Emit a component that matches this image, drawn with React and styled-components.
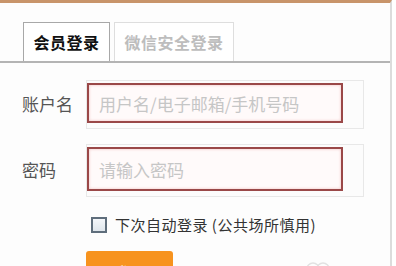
import React from "react";
import styled, { createGlobalStyle } from "styled-components";

const GlobalStyle = createGlobalStyle`
  html, body {
    margin: 0;
    padding: 0;
    background: #ffffff;
    overflow: hidden;
  }
  body {
    font-family: "Noto Sans CJK SC", "Noto Sans", sans-serif;
  }
`;

const Panel = styled.div`
  width: 392px;
  height: 266px;
  overflow: hidden;
  box-sizing: border-box;
  border-top: 3px solid #c8946a;
  border-right: 2px solid #dcdcdc;
  background: #fdfdfd;
  padding-top: 19px;
`;

const TabBar = styled.div`
  display: flex;
  gap: 4px;
  padding-left: 23px;
  border-bottom: 2px solid #b4b4b4;
`;

const Tab = styled.div`
  height: 39px;
  box-sizing: border-box;
  width: ${(p) => p.$w}px;
  display: flex;
  align-items: center;
  justify-content: center;
  border: 1px solid ${(p) => (p.$active ? "#a8a8a8" : "#dedede")};
  border-bottom: none;
  background: #fff;
  font-size: 16px;
  font-weight: 700;
  color: ${(p) => (p.$active ? "#111" : "#bdbdbd")};
  letter-spacing: 0.5px;
`;

const Form = styled.div`
  padding-top: 17px;
  display: flex;
  flex-direction: column;
`;

const Row = styled.div`
  display: flex;
  align-items: flex-start;
  margin-bottom: ${(p) => p.$mb}px;
`;

const Label = styled.div`
  flex: 0 0 86px;
  box-sizing: border-box;
  padding-left: 22px;
  padding-top: ${(p) => p.$pt}px;
  white-space: nowrap;
  font-size: 17px;
  color: #555;
`;

const FieldFrame = styled.div`
  box-sizing: border-box;
  flex: 0 0 277px;
  border: 1px solid #e8e8e8;
  padding: 2px 20px 5px 0;
  background: #fcfcfc;
`;

const Input = styled.input`
  display: block;
  width: 256px;
  height: ${(p) => p.$h}px;
  box-sizing: border-box;
  border: 2px solid #9a4848;
  box-shadow: inset 0 0 3px rgba(230, 150, 150, 0.6);
  background: #fffafa;
  padding: 0 10px;
  font-family: "Noto Sans CJK SC", "Noto Sans", sans-serif;
  font-size: 17px;
  color: #333;
  outline: none;
  &::placeholder {
    color: #c6c6c6;
  }
`;

const Remember = styled.label`
  display: flex;
  align-items: center;
  gap: 8px;
  padding-left: 91px;
  font-size: 15px;
  letter-spacing: 0.5px;
  color: #333;
  margin-bottom: 16px;
`;

const Box = styled.span`
  width: 16px;
  height: 16px;
  box-sizing: border-box;
  border: 2px solid #5f6e7c;
  background: linear-gradient(#f4f7fa, #dfe6ec);
`;

const Bottom = styled.div`
  display: flex;
  align-items: flex-start;
  padding-left: 86px;
`;

const Button = styled.button`
  width: 87px;
  height: 42px;
  border: none;
  border-radius: 3px;
  background: #f7931e;
  color: #fff;
  font-family: "Noto Sans CJK SC", "Noto Sans", sans-serif;
  font-size: 17px;
  font-weight: 700;
  padding: 0;
`;

const Faint = styled.div`
  margin-left: 131px;
  margin-top: 4px;
`;

export default function App() {
  return (
    <>
      <GlobalStyle />
      <Panel>
        <TabBar>
          <Tab $active $w={87}>会员登录</Tab>
          <Tab $w={120}>微信安全登录</Tab>
        </TabBar>
        <Form>
          <Row $mb={15}>
            <Label $pt={11}>账户名</Label>
            <FieldFrame>
              <Input $h={40} placeholder="用户名/电子邮箱/手机号码" />
            </FieldFrame>
          </Row>
          <Row $mb={17}>
            <Label $pt={13}>密码</Label>
            <FieldFrame>
              <Input $h={44} type="password" placeholder="请输入密码" />
            </FieldFrame>
          </Row>
          <Remember>
            <Box />
            下次自动登录 (公共场所慎用)
          </Remember>
          <Bottom>
            <Button>登录</Button>
            <Faint>
              <svg width="28" height="14" viewBox="0 0 28 14">
                <circle cx="9" cy="9" r="6" fill="none" stroke="#e2e2e2" strokeWidth="1.5" />
                <circle cx="19" cy="9" r="6" fill="none" stroke="#e2e2e2" strokeWidth="1.5" />
              </svg>
            </Faint>
          </Bottom>
        </Form>
      </Panel>
    </>
  );
}
